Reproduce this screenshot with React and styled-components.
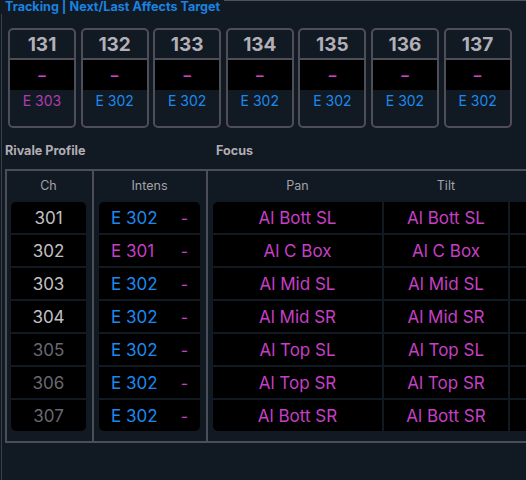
import React from "react";
import styled, { createGlobalStyle } from "styled-components";

const Global = createGlobalStyle`
  html, body { margin: 0; padding: 0; background: #111922; }
  body { font-family: Inter, "Liberation Sans", sans-serif; }
`;

const BLUE = "#1b8af0";
const MAGENTA = "#c63fc6";

const Screen = styled.div`
  width: 526px;
  height: 480px;
  overflow: hidden;
  background: #111922;
  display: flex;
  flex-direction: column;
`;

const TitleRow = styled.div`
  display: flex;
  height: 14px;
`;

const Title = styled.div`
  font-size: 12.6px;
  font-weight: 700;
  color: #1a82e0;
  line-height: 13px;
  padding: 0 4px 0 5px;
  white-space: nowrap;
`;

const TopRule = styled.div`
  flex: 1;
  border-top: 1px solid #4e515a;
`;

const Body = styled.div`
  flex: 1;
  border-left: 1px solid #3a3f48;
  margin-left: 1px;
  padding: 14px 0 0 6px;
  display: flex;
  flex-direction: column;
`;

const Cards = styled.div`
  display: flex;
  gap: 4.6px;
`;

const Card = styled.div`
  width: 68px;
  height: 100px;
  box-sizing: border-box;
  border: 2px solid #4f4d58;
  border-radius: 5px;
  display: flex;
  flex-direction: column;
  overflow: hidden;
`;

const CardNum = styled.div`
  height: 28px;
  border-bottom: 2px solid #4f4d58;
  display: flex;
  align-items: center;
  justify-content: center;
  font-size: 19px;
  font-weight: 700;
  color: #b3afb8;
`;

const CardBand = styled.div`
  height: 30px;
  background: #000;
  display: flex;
  align-items: center;
  justify-content: center;
  color: #cb45cb;
  font-size: 15px;
  font-weight: 600;
`;

const CardCue = styled.div`
  padding-top: 2px;
  text-align: center;
  font-size: 14px;
  line-height: 18px;
  color: ${(p) => (p.$pink ? "#b23cb2" : BLUE)};
`;

const LabelRow = styled.div`
  height: 41px;
  display: flex;
  align-items: center;
  padding-top: 3px;
  box-sizing: border-box;
  margin-left: -3px;
`;

const Label = styled.div`
  font-size: 12.6px;
  font-weight: 700;
  color: #b0adb5;
  width: ${(p) => p.$w || "auto"};
`;

const Table = styled.div`
  margin-left: -3px;
  display: flex;
  border-top: 2px solid #4b4e57;
  border-bottom: 2px solid #4b4e57;
  border-left: 2px solid #4b4e57;
  margin-right: -10px;
`;

const Col = styled.div`
  width: ${(p) => p.$w || "auto"};
  flex: ${(p) => (p.$grow ? 1 : "none")};
  border-right: ${(p) => (p.$grow ? "none" : "2px solid #4b4e57")};
  padding: 0 6px 10px ${(p) => p.$pl || 5}px;
  display: flex;
  flex-direction: column;
  overflow: hidden;
`;

const HeadRow = styled.div`
  height: 31px;
  display: grid;
  grid-template-columns: ${(p) => p.$cols || "1fr"};
  column-gap: 2px;
`;

const Head = styled.div`
  display: flex;
  align-items: center;
  justify-content: center;
  font-size: 12.5px;
  color: #a4a2aa;
  padding-bottom: 2px;
`;

const Group = styled.div`
  display: grid;
  grid-template-columns: ${(p) => p.$cols || "1fr"};
  gap: 2px;
  border-radius: 5px;
  overflow: hidden;
`;

const Cell = styled.div`
  height: 31px;
  background: #000;
  display: flex;
  align-items: center;
  justify-content: ${(p) => p.$justify || "center"};
  padding: ${(p) => p.$pad || "0"};
  font-size: 17px;
  color: ${(p) => p.$color || "#c2c0c6"};
  white-space: nowrap;
  overflow: hidden;
`;

const Dash = styled.span`
  color: ${MAGENTA};
  font-size: 16px;
`;

const cards = [
  ["131", "E 303", true],
  ["132", "E 302"],
  ["133", "E 302"],
  ["134", "E 302"],
  ["135", "E 302"],
  ["136", "E 302"],
  ["137", "E 302"],
];

const rows = [
  ["301", false, "E 302", false, "Al Bott SL"],
  ["302", false, "E 301", true, "Al C Box"],
  ["303", false, "E 302", false, "Al Mid SL"],
  ["304", false, "E 302", false, "Al Mid SR"],
  ["305", true, "E 302", false, "Al Top SL"],
  ["306", true, "E 302", false, "Al Top SR"],
  ["307", true, "E 302", false, "Al Bott SR"],
];

const FOCUS_COLS = "169px 124px 60px";

export default function App() {
  return (
    <Screen>
      <Global />
      <TitleRow>
        <Title>Tracking | Next/Last Affects Target</Title>
        <TopRule />
      </TitleRow>
      <Body>
        <Cards>
          {cards.map(([n, cue, pink]) => (
            <Card key={n}>
              <CardNum>{n}</CardNum>
              <CardBand>–</CardBand>
              <CardCue $pink={pink}>{cue}</CardCue>
            </Card>
          ))}
        </Cards>
        <LabelRow>
          <Label $w="211px">Rivale Profile</Label>
          <Label>Focus</Label>
        </LabelRow>
        <Table>
          <Col $w="75px" $pl={4}>
            <HeadRow>
              <Head>Ch</Head>
            </HeadRow>
            <Group>
              {rows.map(([ch, dim]) => (
                <Cell key={ch} $color={dim ? "#6a6971" : "#c2c0c6"}>
                  {ch}
                </Cell>
              ))}
            </Group>
          </Col>
          <Col $w="101px">
            <HeadRow>
              <Head>Intens</Head>
            </HeadRow>
            <Group>
              {rows.map(([ch, , cue, pink]) => (
                <Cell
                  key={ch}
                  $justify="space-between"
                  $pad="0 12px 0 12px"
                  $color={pink ? MAGENTA : BLUE}
                >
                  <span>{cue}</span>
                  <Dash>-</Dash>
                </Cell>
              ))}
            </Group>
          </Col>
          <Col $grow>
            <HeadRow $cols={FOCUS_COLS}>
              <Head>Pan</Head>
              <Head>Tilt</Head>
              <Head />
            </HeadRow>
            <Group $cols={FOCUS_COLS}>
              {rows.map(([ch, , , , pos]) => (
                <React.Fragment key={ch}>
                  <Cell $color={MAGENTA}>{pos}</Cell>
                  <Cell $color={MAGENTA}>{pos}</Cell>
                  <Cell />
                </React.Fragment>
              ))}
            </Group>
          </Col>
        </Table>
      </Body>
    </Screen>
  );
}
